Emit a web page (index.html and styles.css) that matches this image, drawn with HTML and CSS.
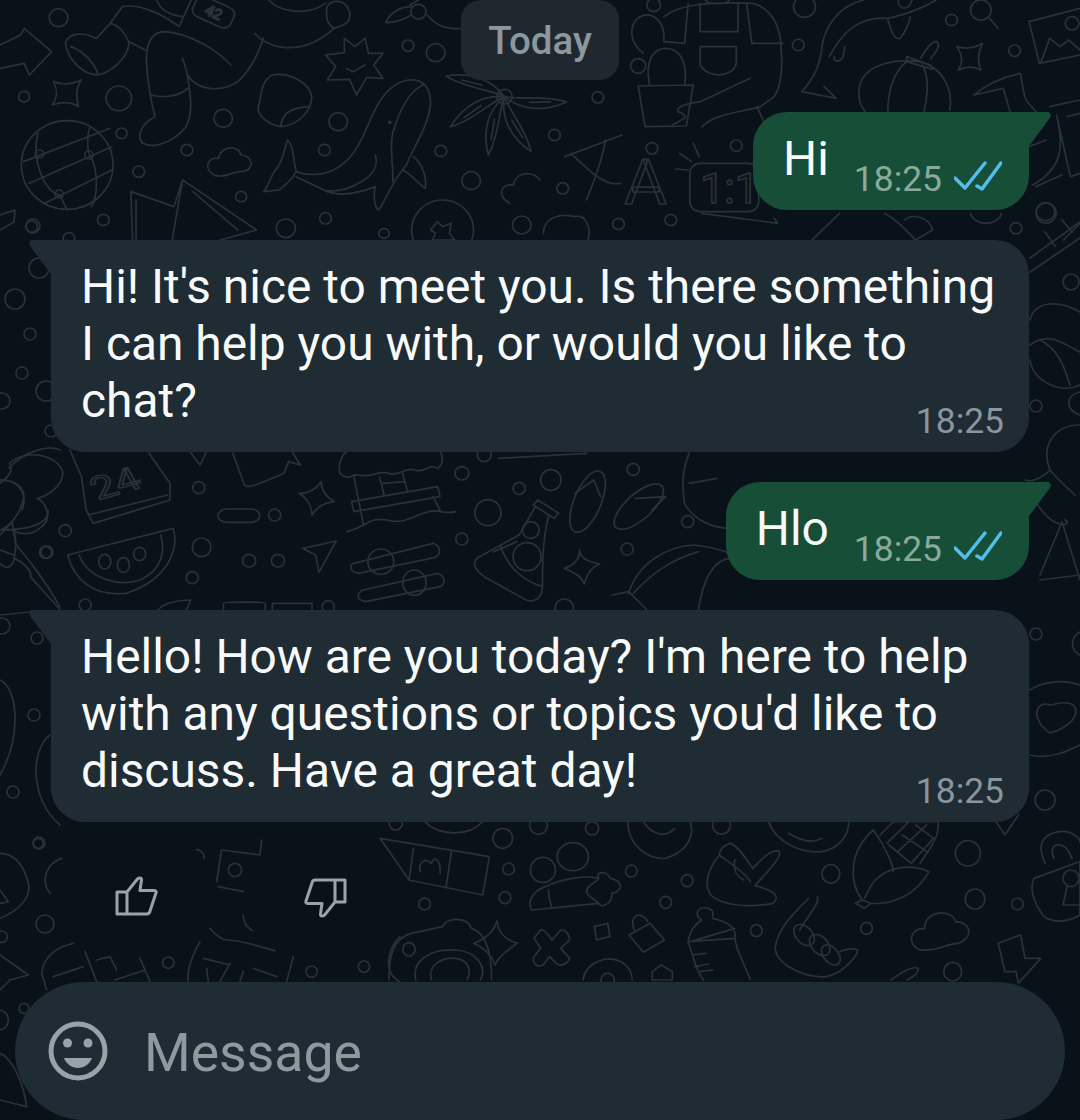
FILE: index.html
```html
<!DOCTYPE html>
<html lang="en">
<head>
<meta charset="utf-8">
<title>Chat</title>
<link rel="stylesheet" href="styles.css">
</head>
<body>
<div class="screen">
  <svg class="wallpaper" viewBox="0 0 1080 1120" aria-hidden="true">
    <defs>
      <g id="petal"><path d="M1465 290C1430 270 1350 265 1295 228C1370 215 1430 240 1465 290ZM1340 240L1400 255"/></g>
    </defs>
    <g transform="scale(.3444 .3333)">
      <circle cx="170" cy="53" r="27"/><circle cx="70" cy="290" r="16"/><circle cx="345" cy="295" r="37"/><circle cx="353" cy="400" r="16"/><circle cx="648" cy="355" r="27"/><circle cx="543" cy="450" r="17"/><circle cx="403" cy="515" r="17"/><circle cx="300" cy="660" r="17"/><circle cx="92" cy="680" r="17"/><circle cx="700" cy="590" r="16"/><circle cx="830" cy="685" r="28"/><circle cx="945" cy="655" r="17"/><circle cx="1115" cy="700" r="15"/><circle cx="982" cy="365" r="27"/><circle cx="942" cy="450" r="17"/><circle cx="1185" cy="137" r="17"/><circle cx="1265" cy="158" r="27"/><circle cx="1280" cy="453" r="17"/><circle cx="1368" cy="542" r="27"/><circle cx="1515" cy="675" r="27"/><circle cx="200" cy="715" r="17"/><circle cx="1285" cy="690" r="90"/>
      <path d="M0 135L60 105L70 85L150 155L85 225L70 190L0 205"/>
      <path d="M190 130C195 105 230 90 280 115L320 70L355 20C400 10 470 40 520 80M520 80L555 0M190 130C195 175 240 225 285 225C330 215 370 170 375 130C365 100 345 75 320 70M205 140C240 150 275 190 285 225M375 125L422 150"/>
      <path d="M480 95C440 95 425 130 425 180C428 250 440 310 450 350C410 370 395 410 415 430C450 450 510 420 540 380C560 340 555 300 545 230C540 200 535 190 530 175M480 95C550 100 630 150 670 195M440 285C470 295 520 290 545 265M545 225C570 270 640 280 690 245C730 210 750 160 765 115M740 100C780 150 880 170 970 85M970 85C1000 75 1020 70 1015 35C1005 0 965 -5 950 20C945 50 950 75 970 85M780 0C810 35 890 50 945 10M455 0C465 30 490 45 530 50"/>
      <rect x="560" y="4" width="120" height="65" rx="22" transform="rotate(25 620 36)"/>
      <text x="596" y="52" font-size="44" transform="rotate(25 620 36)">42</text>
      <path d="M155 245C180 255 205 255 235 240C220 270 220 290 228 320C205 305 180 305 152 315C168 290 168 270 155 245Z"/>
      <path d="M790 225C840 215 900 250 905 290C905 330 870 375 815 380C780 375 745 345 750 320C760 290 755 245 790 225ZM815 380C820 340 840 325 895 320"/>
      <path d="M1060 115L1070 160L1112 160L1085 195L1112 235L1065 232L1035 285L1015 238L950 240L975 200L945 165L1000 158L1000 115L1030 140ZM1005 205L1025 215L1060 195"/>
      <circle cx="195" cy="495" r="133"/><circle cx="115" cy="462" r="12"/><circle cx="258" cy="465" r="12"/><circle cx="172" cy="582" r="12"/>
      <path d="M68 485L320 385M85 550L325 440M130 610L325 510M110 400C90 480 130 580 175 585C185 610 190 620 195 630M260 385C250 420 255 465 265 470C285 520 285 590 265 620"/>
      <path d="M625 527C590 510 600 470 635 475C640 435 695 435 700 465C735 465 740 510 705 515C680 510 660 535 625 527ZM1480 610C1445 590 1450 550 1490 555C1500 510 1550 515 1568 540"/>
      <path d="M835 420C825 450 820 490 800 510C785 530 780 560 765 575L810 570C830 555 850 535 860 515C850 480 855 440 835 420ZM860 515C900 530 950 525 985 500C1030 470 1050 420 1075 360C1100 300 1130 250 1185 240C1230 235 1250 265 1250 310C1245 380 1200 440 1180 495C1140 540 1120 600 1100 630C1085 625 1085 575 1090 560C1040 580 990 590 950 575C920 560 880 540 860 530M1230 255C1190 270 1160 330 1140 400C1130 450 1145 520 1140 545M1090 465C1100 500 1080 530 1040 550C1010 570 970 575 950 572M1200 470C1225 490 1240 530 1235 565C1215 550 1195 525 1170 510"/>
      <circle cx="1132" cy="367" r="3"/>
      <path d="M380 575L505 620L530 540L745 690L640 720M380 575L385 720M395 600L395 720M530 540L500 720M560 575L690 690"/>
      <circle cx="1465" cy="290" r="22"/>
      <use href="#petal"/><use href="#petal" transform="rotate(-50 1465 290)"/><use href="#petal" transform="rotate(-95 1465 290)"/><use href="#petal" transform="rotate(-135 1465 290)"/><use href="#petal" transform="rotate(165 1465 290)"/>
      <circle cx="1215" cy="35" r="22"/>
      <path d="M1195 45C1170 60 1150 68 1120 68C1130 40 1160 20 1195 20M1240 45C1270 80 1300 90 1340 85M1190 15L1215 0M1250 690L1270 665L1285 680L1310 670L1305 700L1320 720L1255 720L1265 700Z"/>
    </g>
    <g transform="translate(540 0) scale(.3444 .3333)">
      <circle cx="168" cy="292" r="17"/><circle cx="42" cy="405" r="17"/><circle cx="750" cy="135" r="17"/><circle cx="325" cy="445" r="17"/><circle cx="570" cy="437" r="17"/><circle cx="66" cy="565" r="17"/><circle cx="768" cy="20" r="32"/><circle cx="1195" cy="60" r="17"/><circle cx="1378" cy="152" r="17"/><circle cx="1468" cy="635" r="27"/><circle cx="1382" cy="685" r="17"/><circle cx="228" cy="672" r="17"/><circle cx="380" cy="660" r="17"/><circle cx="285" cy="198" r="22"/><circle cx="330" cy="15" r="20"/>
      <path d="M285 258L445 255L425 378L305 380ZM318 255C305 190 325 145 365 145C405 145 430 185 420 255M300 160C260 130 255 75 290 50C320 35 365 55 360 125"/>
      <path d="M360 50C400 15 480 5 620 10C680 30 700 90 700 150C705 200 700 260 680 290L640 320C570 340 510 340 470 380M610 235L465 305C430 310 395 320 400 335C415 340 425 345 420 355L385 375M430 10L420 130L360 125M600 10L615 130L705 130M465 10L465 95L575 95L575 10M465 140L570 140L570 190C560 235 485 235 465 195ZM480 0C490 15 540 15 550 0M630 320L650 365"/>
      <path d="M760 275C800 230 815 190 820 130C835 60 880 15 940 0M760 275L860 295L825 260M840 170C880 90 930 50 1010 55C1060 45 1120 20 1150 0M1010 60C1020 90 1025 120 1045 115C1060 100 1075 60 1075 50M855 170C850 185 870 190 880 170L885 140M1040 0C1040 30 1070 35 1080 0"/>
      <path d="M1190 330C1200 270 1170 200 1100 185C1040 175 950 190 930 250C920 290 930 320 945 335M1065 185C1020 220 1010 290 1010 335M1110 195C1130 230 1125 290 1115 335M1065 170L1135 195L1140 208L1065 185ZM1105 175C1120 150 1135 125 1150 125C1165 130 1155 150 1135 175"/>
      <path d="M1210 140C1235 148 1260 145 1285 130C1270 160 1270 185 1280 210C1255 195 1235 200 1215 210C1228 185 1228 165 1210 140Z"/>
      <circle cx="1280" cy="30" r="30"/>
      <path d="M1305 55L1330 85M1420 65L1568 25M1420 65L1450 190L1568 165M1455 185L1480 115L1510 140L1535 120L1568 150"/>
      <circle cx="1545" cy="70" r="20"/>
      <path d="M1260 285C1300 250 1350 230 1395 220L1405 280C1410 310 1430 320 1440 335M1260 285L1345 265L1365 335M1480 320L1568 300M1500 345C1515 420 1530 500 1430 555M1420 440L1470 420M1440 560L1515 525M1500 345L1540 530L1568 520M1530 350L1568 340"/>
      <path d="M72 470L238 405M90 460C150 520 190 560 235 550M190 420C180 490 150 560 135 600"/>
      <text x="245" y="612" font-size="190">A</text>
      <rect x="435" y="490" width="200" height="145" rx="30"/>
      <text x="465" y="610" font-size="125">1:1</text>
      <path d="M470 640L690 670L680 655M395 507L430 510M405 460L440 485M445 430L462 470"/>
      <path d="M10 700C10 650 60 640 100 650C130 640 150 680 140 720M790 720L870 640M1000 640C1040 660 1090 720 1090 720M1060 660C1080 640 1130 650 1140 690L1090 720M1250 640C1260 680 1330 680 1340 640M1520 720L1568 670"/>
    </g>
    <g transform="translate(0 440) scale(.4656 .3333)">
      <ellipse cx="427" cy="143" rx="13" ry="18"/><ellipse cx="590" cy="225" rx="13" ry="18"/><ellipse cx="140" cy="272" rx="13" ry="18"/><ellipse cx="98" cy="337" rx="13" ry="18"/><ellipse cx="433" cy="322" rx="20" ry="28"/><ellipse cx="535" cy="362" rx="14" ry="19"/><ellipse cx="597" cy="362" rx="14" ry="19"/><ellipse cx="413" cy="413" rx="13" ry="18"/><ellipse cx="183" cy="495" rx="13" ry="18"/><ellipse cx="992" cy="100" rx="15" ry="20"/><ellipse cx="1115" cy="145" rx="13" ry="18"/><ellipse cx="1183" cy="120" rx="22" ry="31"/><ellipse cx="1048" cy="218" rx="28" ry="39"/><ellipse cx="992" cy="297" rx="13" ry="18"/><ellipse cx="1360" cy="88" rx="13" ry="18"/><ellipse cx="1477" cy="245" rx="13" ry="18"/><ellipse cx="1347" cy="327" rx="13" ry="18"/><ellipse cx="1212" cy="505" rx="20" ry="28"/><ellipse cx="705" cy="500" rx="13" ry="18"/><ellipse cx="1040" cy="45" rx="15" ry="20"/>
      <path d="M0 130C20 110 30 90 20 70C60 20 130 50 135 100C135 130 110 165 80 175C100 190 115 240 85 265C70 285 40 285 30 270M0 120C40 120 55 150 50 180C40 230 20 260 0 270M30 270C35 300 35 330 30 355C55 370 70 400 65 410L130 510M0 330L30 345M0 370C15 395 30 375 30 355"/>
      <path d="M150 30L175 110L185 210L200 250L365 180L365 130L320 40M190 225L360 165"/>
      <text x="190" y="165" font-size="95" transform="rotate(-22 240 120)">24</text>
      <path d="M405 30L430 75L445 30M500 40L525 135C530 145 545 140 610 100L620 65L645 75L625 30"/>
      <path d="M690 125C690 150 700 170 718 185C690 190 680 205 670 225C670 200 660 175 642 160C665 160 680 145 690 125Z"/>
      <rect x="468" y="207" width="90" height="40" rx="20"/>
      <path d="M145 345L372 265C385 330 360 420 270 460C200 470 160 420 145 345ZM170 345C190 420 260 440 300 420C350 390 355 330 345 285"/>
      <ellipse cx="225" cy="365" rx="13" ry="22"/><ellipse cx="265" cy="375" rx="13" ry="22"/><ellipse cx="300" cy="342" rx="13" ry="20"/>
      <path d="M650 325L722 303L685 397L678 345Z"/>
      <path d="M760 370L930 310C950 320 945 345 935 352L770 400C750 395 750 375 760 370ZM780 450L940 400C955 410 960 430 945 440L785 485C765 480 765 460 780 450Z"/>
      <ellipse cx="818" cy="365" rx="28" ry="38"/><ellipse cx="890" cy="428" rx="25" ry="38"/>
      <path d="M730 100C725 70 735 40 750 30L945 30C950 50 955 70 940 85C920 70 915 100 890 90C870 80 860 110 835 100C815 90 795 115 770 105C755 100 750 125 730 100ZM760 110L780 250M755 185L940 140L945 170L760 215ZM930 170L945 210M815 110L825 165M865 100L875 155M820 130L870 125M745 275C790 260 790 230 830 240C870 255 890 225 920 215C945 205 950 225 978 215"/>
      <path d="M1145 195L1190 235L1200 220L1155 180ZM1150 200L1115 285L1030 350C1010 365 1020 390 1040 410L1130 480C1150 490 1165 470 1165 440C1165 380 1165 300 1178 230M1060 335C1090 320 1100 310 1110 305M1075 320C1095 395 1130 425 1165 440"/>
      <ellipse cx="1140" cy="270" rx="18" ry="25"/><ellipse cx="1132" cy="350" rx="30" ry="42"/>
      <ellipse cx="1262" cy="185" rx="30" ry="95" transform="rotate(15 1262 185)"/><ellipse cx="1372" cy="200" rx="32" ry="80" transform="rotate(35 1372 200)"/>
      <path d="M1235 160L1275 120L1290 170M1365 175L1430 170L1400 210"/>
      <path d="M1245 330C1245 350 1260 365 1288 372C1265 385 1260 410 1255 432C1250 410 1230 395 1212 385C1235 375 1245 355 1245 330Z"/>
      <path d="M1070 55L1260 40M1480 40C1465 90 1465 130 1470 190C1490 240 1530 265 1568 265M1480 130L1540 115M1350 460C1370 370 1430 320 1490 315C1530 320 1568 340 1568 340M1315 465L1350 455L1390 510M1360 460C1400 400 1440 360 1500 335M1500 510C1510 420 1530 360 1568 355"/>
      <path d="M480 510L480 490C480 485 570 485 570 490L570 510M585 510L585 490L670 490L670 510M340 510C350 490 380 480 410 480L400 510"/>
    </g>
    <g transform="translate(380 815) scale(.4464 .3333)">
      <ellipse cx="275" cy="70" rx="22" ry="30"/><ellipse cx="475" cy="40" rx="15" ry="20"/><ellipse cx="288" cy="162" rx="13" ry="18"/><ellipse cx="280" cy="248" rx="13" ry="18"/><ellipse cx="100" cy="267" rx="13" ry="18"/><ellipse cx="563" cy="168" rx="13" ry="18"/><ellipse cx="688" cy="197" rx="13" ry="18"/><ellipse cx="640" cy="262" rx="13" ry="18"/><ellipse cx="1317" cy="115" rx="28" ry="38"/><ellipse cx="1010" cy="177" rx="20" ry="28"/><ellipse cx="1333" cy="252" rx="22" ry="30"/><ellipse cx="1428" cy="267" rx="13" ry="18"/><ellipse cx="843" cy="347" rx="13" ry="18"/><ellipse cx="1090" cy="340" rx="13" ry="18"/><ellipse cx="1283" cy="470" rx="20" ry="28"/><ellipse cx="35" cy="25" rx="15" ry="20"/><ellipse cx="765" cy="30" rx="20" ry="28"/><ellipse cx="355" cy="30" rx="20" ry="28"/>
      <path d="M0 70L245 125L230 240L65 195ZM75 100L65 195M160 110L148 215M90 170C85 145 100 125 115 145C120 125 135 125 135 175"/>
      <ellipse cx="432" cy="125" rx="35" ry="42"/><ellipse cx="365" cy="165" rx="28" ry="38"/>
      <path d="M340 285C330 260 340 230 370 215C410 190 460 180 490 190M340 285L490 265M490 190C480 170 510 165 515 190C540 195 550 225 520 235C520 270 495 280 490 265C480 250 455 240 465 220C470 205 485 205 490 190ZM378 225C375 245 385 270 385 280"/>
      <path d="M100 20C130 60 195 70 230 20M555 20C555 90 600 135 640 130C690 110 705 60 695 20M590 20C610 60 640 70 660 40M870 20C890 90 950 115 990 110C1030 100 1050 60 1050 20M915 55C945 80 970 85 990 70"/>
      <path d="M760 120C730 170 725 220 745 245C770 270 820 280 880 265C900 245 880 225 840 212C860 180 900 130 895 110C880 100 860 125 835 160C820 130 800 90 785 85C770 90 760 105 760 120ZM760 120C780 140 820 175 830 200M795 135C790 170 800 185 815 195"/>
      <path d="M1080 255L1065 265L1085 280L1100 265ZM1080 255C1050 200 1050 110 1105 45C1130 90 1150 150 1150 170M1100 265C1150 270 1200 240 1230 170C1190 145 1140 155 1110 195C1095 215 1090 240 1085 250M1120 60L1150 20L1250 20C1255 70 1225 110 1210 145M1140 90L1190 145M1170 60L1225 110M1200 30L1240 70M1185 20L1135 85M1225 30L1160 110M1240 70L1190 145"/>
      <path d="M1465 190L1568 140L1568 300C1530 330 1490 320 1480 290C1460 250 1455 220 1465 190ZM1490 145C1475 100 1475 60 1520 50C1550 45 1568 70 1568 80M1510 130C1500 100 1510 85 1525 90C1540 95 1545 115 1550 130M1540 210L1530 270L1568 270"/>
      <ellipse cx="1548" cy="190" rx="18" ry="25"/>
      <path d="M20 495C20 420 30 370 70 355L140 335C150 305 195 305 205 340C240 355 250 420 250 495M80 495C70 440 110 400 170 405C220 410 240 460 225 495M115 495C105 450 140 425 170 430C200 435 205 470 195 495"/>
      <ellipse cx="65" cy="403" rx="14" ry="20"/>
      <path d="M262 318C265 355 280 375 308 385C285 405 265 425 258 450C250 420 235 400 210 385C240 370 255 350 262 318Z"/>
      <path d="M345 370L360 345C370 340 380 365 385 375L405 345C420 345 425 365 425 375L405 400L425 430C420 450 400 455 395 445L380 425L365 450C350 460 340 440 345 425L360 400Z"/>
      <path d="M480 335L510 325L515 365L485 375ZM558 360L605 325L637 375L590 412ZM570 345C555 300 585 285 600 320"/>
      <path d="M720 315C700 300 715 270 735 280C750 285 745 300 745 310C780 320 800 340 795 370L690 380C695 350 700 335 720 315ZM795 340L690 382M690 380L700 420C705 450 720 490 725 495M795 370L800 400L830 495M705 455L735 447M715 470L745 465M700 420L730 415"/>
      <path d="M960 250C930 290 890 340 885 400C890 450 950 490 1000 485C1040 475 1070 420 1070 405C1055 395 1030 410 1030 410M980 245C985 265 960 300 940 345"/>
      <ellipse cx="950" cy="360" rx="20" ry="34" transform="rotate(-25 950 360)"/><ellipse cx="985" cy="390" rx="20" ry="34" transform="rotate(-25 985 390)"/><ellipse cx="1010" cy="420" rx="18" ry="32" transform="rotate(-25 1010 420)"/>
      <path d="M1210 405C1180 390 1185 340 1220 340C1220 285 1280 280 1290 320C1325 320 1330 370 1295 385C1270 385 1250 410 1210 405ZM1385 385L1435 360L1445 430L1480 430L1430 505L1425 470L1400 470ZM610 470L630 450L655 470L655 495L610 495ZM455 495C460 440 510 420 540 440C560 455 565 480 565 495M1145 495C1160 480 1190 450 1205 460C1210 470 1190 490 1180 495M1380 20L1400 60L1430 0"/>
      <ellipse cx="510" cy="495" rx="15" ry="20"/>
    </g>
    <g>
      <circle cx="1046" cy="213" r="10"/><circle cx="1071" cy="282" r="8"/><circle cx="1036" cy="406" r="6"/><circle cx="15" cy="299" r="10"/><circle cx="33" cy="226" r="7"/><circle cx="39" cy="268" r="10"/><circle cx="30" cy="334" r="6"/><circle cx="22" cy="373" r="6"/><circle cx="46" cy="391" r="10"/><circle cx="2" cy="401" r="8"/><circle cx="51" cy="431" r="6"/><circle cx="47" cy="552" r="6"/><circle cx="2" cy="626" r="8"/><circle cx="37" cy="638" r="6"/><circle cx="34" cy="715" r="6"/><circle cx="13" cy="792" r="6"/><circle cx="39" cy="843" r="6"/><circle cx="1036" cy="634" r="6"/><circle cx="1045" cy="800" r="10"/>
      <path d="M1030 258L1080 222M1030 272L1080 238M1045 232L1055 246M1062 220L1072 232M1030 320C1035 300 1060 300 1080 312M1030 345C1050 330 1065 345 1080 352M1030 360C1032 380 1060 395 1080 385M1040 340C1060 350 1065 370 1070 385M1080 392C1065 395 1065 410 1080 415M1080 425C1055 425 1040 445 1050 470C1040 480 1030 482 1025 480M1050 470C1060 482 1070 490 1075 495M1030 490C1050 535 1075 525 1065 520M1062 522L1040 575M1040 580L1080 575M1062 522L1080 580M1080 632C1070 637 1070 650 1080 655M1050 705C1035 700 1030 720 1050 733C1080 725 1085 700 1060 703L1050 705M1030 690C1045 680 1065 680 1080 685M1030 755C1050 760 1070 750 1080 745"/>
      <path d="M0 215L15 210L14 222L0 230M9 468C25 450 50 445 60 450M0 480C20 480 28 495 22 510M0 530C25 530 50 525 48 510M0 535L12 522L16 545C25 555 45 580 60 607M0 615L30 612M0 680C20 690 20 740 0 775M50 735C30 750 30 800 60 825"/>
    </g>
    <g transform="translate(0 840) scale(.3333)">
      <circle cx="115" cy="10" r="15"/><circle cx="135" cy="252" r="27"/><circle cx="5" cy="290" r="17"/><circle cx="505" cy="368" r="17"/><circle cx="935" cy="395" r="17"/><circle cx="1092" cy="380" r="17"/><circle cx="72" cy="505" r="15"/><circle cx="-5" cy="540" r="30"/><circle cx="705" cy="90" r="20"/>
      <path d="M0 40C40 40 70 70 85 130C95 170 60 210 0 235M185 55C140 70 120 120 150 160M0 150L25 185L0 190M220 310C170 320 130 350 125 400L140 450M160 410L250 380M255 335L290 425M290 360L330 350L350 390M420 355L450 425M345 420L435 390M600 305C570 360 560 400 565 425M610 355L690 375M620 385L625 425M690 370L660 425M730 395L720 425M760 385L830 410M880 350L860 425M1200 290C1160 330 1150 400 1200 425M0 345L85 405L30 420L0 450M0 640C30 650 70 720 80 800L0 780M665 30L780 45L785 0M665 30L650 125M655 140L730 155M590 28C605 30 615 45 612 55M730 225C730 250 745 265 758 272M630 265C650 290 670 300 680 300C720 300 780 320 825 332"/>
    </g>
  </svg>

  <main class="chat">
    <div class="day-chip">Today</div>

    <div class="bubble out">
      <span class="text">Hi</span>
      <span class="meta">18:25
        <svg class="ticks" viewBox="0 0 48 30"><path d="M1 17L11 27L31 2M23 25L28 28L47 2"/></svg>
      </span>
    </div>

    <div class="bubble in">
      <p class="text">Hi! It's nice to meet you. Is there something I can help you with, or would you like to</p>
      <div class="last-line">
        <span class="text">chat?</span>
        <span class="meta">18:25</span>
      </div>
    </div>

    <div class="bubble out">
      <span class="text">Hlo</span>
      <span class="meta">18:25
        <svg class="ticks" viewBox="0 0 48 30"><path d="M1 17L11 27L31 2M23 25L28 28L47 2"/></svg>
      </span>
    </div>

    <div class="bubble in">
      <p class="text">Hello! How are you today? I'm here to help with any questions or topics you'd like to</p>
      <div class="last-line">
        <span class="text">discuss. Have a great day!</span>
        <span class="meta">18:25</span>
      </div>
    </div>

    <div class="feedback">
      <svg class="thumb" viewBox="0 0 44 44"><path d="M3 18H13V40H3ZM13 18L23 5.500C24.500 3.500 28 3.500 27.500 6L26 16.500H40.500C42 16.500 42.500 18 42 19L35.500 38.500C35 39.500 34.500 40 33 40H13"/></svg>
      <svg class="thumb down" viewBox="0 0 44 44"><path d="M3 18H13V40H3ZM13 18L23 5.500C24.500 3.500 28 3.500 27.500 6L26 16.500H40.500C42 16.500 42.500 18 42 19L35.500 38.500C35 39.500 34.500 40 33 40H13"/></svg>
    </div>

    <div class="composer">
      <svg class="emoji" viewBox="0 0 60 60">
        <circle class="emoji-face" cx="30" cy="30" r="27"/>
        <circle class="emoji-fill" cx="19.500" cy="22" r="4.500"/>
        <circle class="emoji-fill" cx="40" cy="22" r="4.500"/>
        <path class="emoji-fill" d="M16 37H44C42 43 36 47 30 47C24 47 18 43 16 37Z"/>
      </svg>
      <span class="placeholder">Message</span>
    </div>
  </main>
</div>
</body>
</html>
```

FILE: styles.css
```css
* { box-sizing: border-box; }

html, body {
  margin: 0;
  padding: 0;
}

body {
  background: #0a1219;
  font-family: Roboto, "Noto Sans", sans-serif;
}

.screen {
  position: relative;
  width: 1080px;
  height: 1120px;
  overflow: hidden;
  background: #0a1219;
}

.wallpaper {
  position: absolute;
  inset: 0;
  width: 1080px;
  height: 1120px;
}

.wallpaper circle,
.wallpaper path,
.wallpaper rect,
.wallpaper ellipse,
.wallpaper text {
  fill: none;
  stroke: #2a3138;
  stroke-width: 1.7px;
  vector-effect: non-scaling-stroke;
  stroke-linecap: round;
  stroke-linejoin: round;
}

.wallpaper text {
  font-family: Roboto, sans-serif;
}

.chat {
  position: relative;
  display: flex;
  flex-direction: column;
  height: 1120px;
}

.day-chip {
  align-self: center;
  display: flex;
  align-items: center;
  justify-content: center;
  flex-shrink: 0;
  width: 158px;
  height: 80px;
  margin-bottom: 32px;
  border-radius: 20px;
  background: #1f282f;
  color: #8d979e;
  font-size: 38.500px;
  font-weight: 500;
}

.bubble {
  position: relative;
  display: flex;
  flex-shrink: 0;
  margin-bottom: 30px;
  padding: 19px 25px 22px 30px;
  color: #f8fafa;
  font-size: 47.900px;
  line-height: 57px;
}

.bubble::before {
  content: "";
  position: absolute;
  top: 0;
  width: 22px;
  height: 34px;
}

.bubble.out {
  align-self: flex-end;
  align-items: flex-end;
  gap: 25px;
  margin-right: 51px;
  padding-right: 27px;
  background: #164e38;
  border-radius: 34px 0 34px 34px;
}

.bubble.out::before {
  left: 100%;
  background: #164e38;
  clip-path: polygon(0 0, 90% 0, 100% 8%, 95% 18%, 0 100%);
}

.bubble.in {
  flex-direction: column;
  width: 978px;
  margin-left: 51px;
  background: #1f2c34;
  border-radius: 0 34px 34px 34px;
}

.bubble.in::before {
  right: 100%;
  background: #1f2c34;
  clip-path: polygon(100% 0, 10% 0, 0 8%, 5% 18%, 100% 100%);
}

.text {
  margin: 0;
}

.last-line {
  display: flex;
  justify-content: space-between;
  align-items: flex-end;
  height: 57px;
}

.meta {
  display: flex;
  align-items: center;
  gap: 12px;
  height: 42px;
  color: #8a959d;
  font-size: 35.400px;
  line-height: 42px;
}

.bubble.out .meta {
  margin-bottom: -12px;
  color: #8aab9c;
}

.bubble.in .meta {
  margin-bottom: -12px;
}

.ticks {
  width: 48px;
  height: 30px;
  margin-bottom: 6px;
  fill: none;
  stroke: #53bdeb;
  stroke-width: 3.500px;
  stroke-linecap: round;
  stroke-linejoin: round;
}

.feedback {
  display: flex;
  flex-shrink: 0;
  gap: 146px;
  height: 108px;
  margin-top: 22px;
  padding: 0 0 0 114px;
}

.thumb {
  width: 44px;
  height: 44px;
  fill: none;
  stroke: #9aa3a9;
  stroke-width: 3px;
  stroke-linejoin: round;
  stroke-linecap: round;
}

.thumb.down {
  margin-top: 2px;
  transform: rotate(180deg);
}

.composer {
  display: flex;
  align-items: center;
  flex-shrink: 0;
  gap: 36px;
  width: 1050px;
  height: 138px;
  margin-left: 15px;
  padding: 0 0 0 33px;
  background: #1f2c34;
  border-radius: 69px;
}

.emoji {
  width: 60px;
  height: 60px;
  flex-shrink: 0;
}

.emoji-face {
  fill: none;
  stroke: #99a2a8;
  stroke-width: 5px;
}

.emoji-fill {
  fill: #99a2a8;
}

.placeholder {
  padding-top: 3px;
  color: #8f999f;
  font-size: 53.500px;
  line-height: 60px;
}
```
